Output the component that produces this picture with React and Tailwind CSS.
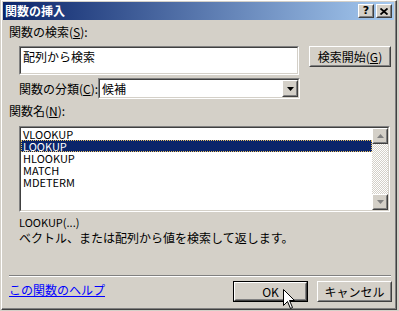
import React from "react";

const FONT = { fontFamily: '"Noto Sans CJK JP", "Noto Sans", sans-serif' };

function Raised({ className = "", children }) {
  return (
    <div className={"border border-t-white border-l-white border-b-[#404040] border-r-[#404040] bg-[#d4d0c8] " + className}>
      <div className="w-full h-full border border-t-[#d4d0c8] border-l-[#d4d0c8] border-b-[#808080] border-r-[#808080] flex items-center justify-center">
        {children}
      </div>
    </div>
  );
}

function Sunken({ className = "", children, inner = "" }) {
  return (
    <div className={"border border-t-[#808080] border-l-[#808080] border-b-white border-r-white " + className}>
      <div className={"w-full h-full border border-t-[#404040] border-l-[#404040] border-b-[#d4d0c8] border-r-[#d4d0c8] bg-white " + inner}>
        {children}
      </div>
    </div>
  );
}

function Tri({ dir = "down", color = "#000" }) {
  return (
    <svg width="7" height="4" viewBox="0 0 7 4">
      {dir === "down" ? (
        <polygon points="0,0 7,0 3.5,4" fill={color} />
      ) : (
        <polygon points="0,4 7,4 3.5,0" fill={color} />
      )}
    </svg>
  );
}

export default function App() {
  const items = ["VLOOKUP", "LOOKUP", "HLOOKUP", "MATCH", "MDETERM"];
  return (
    <div className="w-[399px] h-[311px] bg-[#d4d0c8] overflow-hidden relative text-[12px] leading-[12px] text-black" style={FONT}>
      <div className="ml-[1px] w-[396px] h-[310px] border-t border-l border-t-white border-l-white border-r border-b border-r-[#404040] border-b-[#404040]">
        <div className="w-full h-full border-r border-b border-r-[#808080] border-b-[#808080] pl-[1px] pt-[1px]">
          {/* Title bar */}
          <div className="h-[18px] w-[391px] bg-[linear-gradient(to_right,#0a246a,#a6caf0)] flex items-center pl-[2px] pr-[2px]">
            <span className="text-white font-bold text-[12px] leading-[12px]">関数の挿入</span>
            <div className="ml-auto flex gap-[2px]">
              <Raised className="w-[16px] h-[14px]">
                <span className="font-bold text-[11px] leading-[10px]" style={{ fontFamily: '"DejaVu Sans", sans-serif' }}>?</span>
              </Raised>
              <Raised className="w-[16px] h-[14px]">
                <svg width="8" height="7" viewBox="0 0 8 7">
                  <path d="M0.5 0.5 L7.5 6.5 M7.5 0.5 L0.5 6.5" stroke="#000" strokeWidth="1.8" />
                </svg>
              </Raised>
            </div>
          </div>

          {/* Body */}
          <div className="pl-[6px] flex flex-col">
            <div className="mt-[6px] h-[12px] whitespace-nowrap">関数の検索(<span className="underline">S</span>):</div>

            <div className="mt-[8px] flex items-start pl-[10px]">
              <Sunken className="w-[280px] h-[29px]" inner="pl-[2px] pt-[3px]">
                <span>配列から検索</span>
              </Sunken>
              <Raised className="ml-[10px] w-[82px] h-[21px]">
                <span className="whitespace-nowrap">検索開始(<span className="underline">G</span>)</span>
              </Raised>
            </div>

            <div className="mt-[3px] flex items-center pl-[10px]">
              <div className="w-[79px] whitespace-nowrap">関数の分類(<span className="underline">C</span>):</div>
              <Sunken className="w-[202px] h-[21px]" inner="flex items-center">
                <span className="pl-[2px]">候補</span>
                <Raised className="ml-auto w-[16px] h-[17px]">
                  <Tri dir="down" />
                </Raised>
              </Sunken>
            </div>

            <div className="mt-[6px] h-[12px] whitespace-nowrap">関数名(<span className="underline">N</span>):</div>

            <div className="mt-[9px] pl-[10px]">
              <Sunken className="w-[371px] h-[86px]" inner="flex">
                <div className="flex-1 flex flex-col">
                  {items.map((it) => (
                    <div
                      key={it}
                      className={
                        "h-[12px] pl-[2px] text-[11px] leading-[12px] " +
                        (it === "LOOKUP"
                          ? "bg-[#0a246a] text-white outline-1 outline-dotted outline-[#e8c060] -outline-offset-1"
                          : "")
                      }
                    >
                      {it}
                    </div>
                  ))}
                </div>
                <div className="w-[16px] h-full flex flex-col bg-[repeating-conic-gradient(#d4d0c8_0_25%,#ffffff_0_50%)] bg-[length:2px_2px]">
                  <Raised className="w-[16px] h-[16px]">
                    <Tri dir="up" color="#808080" />
                  </Raised>
                  <div className="flex-1" />
                  <Raised className="w-[16px] h-[16px]">
                    <Tri dir="down" color="#808080" />
                  </Raised>
                </div>
              </Sunken>
            </div>

            <div className="mt-[4px] pl-[10px] h-[12px] text-[11px]">LOOKUP(...)</div>
            <div className="mt-[4px] pl-[10px] h-[12px] whitespace-nowrap">ベクトル、または配列から値を検索して返します。</div>

            <div className="mt-[31px] w-[382px] border-t border-b border-t-[#808080] border-b-white" />

            <div className="mt-[4px] flex items-start">
              <a className="mt-[3px] text-[#0000ff] underline whitespace-nowrap">この関数のヘルプ</a>
              <div className="ml-auto mr-[3px] flex gap-[9px]">
                <div className="border border-black w-[75px] h-[21px]">
                  <Raised className="w-full h-full">
                    <span>OK</span>
                  </Raised>
                </div>
                <Raised className="w-[75px] h-[21px]">
                  <span>キャンセル</span>
                </Raised>
              </div>
            </div>
          </div>
        </div>
      </div>

      {/* Mouse cursor */}
      <svg className="absolute left-[283px] top-[289px]" width="13" height="21" viewBox="0 0 13 21">
        <path d="M0.5 0.5 L0.5 16.5 L4.5 12.5 L7.5 19.5 L9.5 18.5 L6.5 11.5 L11.5 11.5 Z" fill="#fff" stroke="#000" strokeWidth="1" />
      </svg>
    </div>
  );
}
